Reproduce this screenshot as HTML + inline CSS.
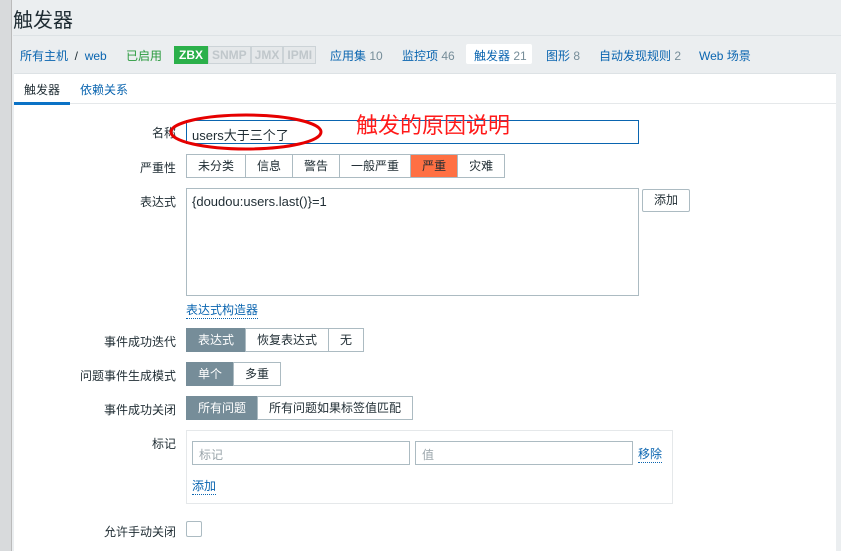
<!DOCTYPE html>
<html><head><meta charset="utf-8"><style>
*{box-sizing:border-box;margin:0;padding:0}
body{width:841px;height:551px;overflow:hidden;background:#ebeef0;position:relative;font-family:"Liberation Sans","Noto Sans CJK SC",sans-serif;font-size:12px;color:#1f2c33}
.a{position:absolute;white-space:nowrap}
.lnk{color:#0a65b0}
.cnt{color:#768d99}
.lbl{position:absolute;right:665px;text-align:right;color:#1f2c33}
.inp{position:absolute;border:1px solid #acbbc2;background:#fff}
.bg{position:absolute;display:flex;height:24px}
.bg div{border:1px solid #acbbc2;margin-left:-1px;padding:0 11px;line-height:22px;background:#fff}
.bg div.on{background:#768d99;color:#fff;border-color:#768d99}
.dot{border-bottom:1px dotted #0a65b0}
</style></head><body>
<div class="a" style="left:0;top:0;width:12px;height:551px;background:#d8dadc;border-right:1px solid #bbb"></div>
<div class="a" style="left:13px;top:4px;font-size:20px;color:#1f2c33">触发器</div>
<div class="a" style="left:13px;top:35px;width:828px;height:1px;background:#dde2e5"></div>
<div class="a lnk" style="left:20px;top:47px">所有主机 <span style="color:#1f2c33">&nbsp;/&nbsp;</span> web</div>
<div class="a" style="left:126px;top:47px;color:#2a9a3e">已启用</div>
<div class="a" style="left:174px;top:46px;display:flex;font-weight:bold;font-size:12px;height:18px;line-height:16px">
<span style="background:#2bb04a;color:#fff;padding:0 4px;border:1px solid #2bb04a">ZBX</span><span style="border:1px solid #ccd3d7;color:#c0c7cb;padding:0 3px;background:#e5e8ea">SNMP</span><span style="border:1px solid #ccd3d7;color:#c0c7cb;padding:0 3px;background:#e5e8ea">JMX</span><span style="border:1px solid #ccd3d7;color:#c0c7cb;padding:0 3px;background:#e5e8ea">IPMI</span></div>
<div class="a lnk" style="left:330px;top:47px">应用集 <span class="cnt">10</span></div>
<div class="a lnk" style="left:402px;top:47px">监控项 <span class="cnt">46</span></div>
<div class="a" style="left:466px;top:44px;width:66px;height:20px;background:#fff;border-radius:2px"></div>
<div class="a lnk" style="left:474px;top:47px">触发器 <span class="cnt">21</span></div>
<div class="a lnk" style="left:546px;top:47px">图形 <span class="cnt">8</span></div>
<div class="a lnk" style="left:599px;top:47px">自动发现规则 <span class="cnt">2</span></div>
<div class="a lnk" style="left:699px;top:47px">Web 场景</div>
<div class="a" style="left:14px;top:73px;width:822px;height:478px;background:#fff;border-top:1px solid #dde2e5"></div>
<div class="a" style="left:24px;top:81px">触发器</div>
<div class="a lnk" style="left:80px;top:81px">依赖关系</div>
<div class="a" style="left:14px;top:102px;width:56px;height:3px;background:#0a72c6"></div>
<div class="a" style="left:70px;top:103px;width:766px;height:1px;background:#e5e8ea"></div>

<div class="lbl" style="top:124px">名称</div>
<div class="inp" style="left:186px;top:120px;width:453px;height:24px;border-color:#0a65b0;padding:4px 5px;font-size:13px">users大于三个了</div>
<div class="lbl" style="top:159px">严重性</div>
<div class="bg" style="left:187px;top:154px"><div>未分类</div><div>信息</div><div>警告</div><div>一般严重</div><div style="background:#ff7043;border-color:#acbbc2">严重</div><div>灾难</div></div>
<div class="lbl" style="top:193px">表达式</div>
<div class="inp" style="left:186px;top:188px;width:453px;height:108px;padding:5px 5px;font-size:13px">{doudou:users.last()}=1</div>
<div class="inp" style="left:642px;top:189px;width:48px;height:23px;text-align:center;line-height:21px;border-radius:2px">添加</div>
<div class="a lnk dot" style="left:186px;top:301px">表达式构造器</div>

<div class="lbl" style="top:333px">事件成功迭代</div>
<div class="bg" style="left:187px;top:328px"><div class="on">表达式</div><div>恢复表达式</div><div>无</div></div>
<div class="lbl" style="top:367px">问题事件生成模式</div>
<div class="bg" style="left:187px;top:362px"><div class="on">单个</div><div>多重</div></div>
<div class="lbl" style="top:401px">事件成功关闭</div>
<div class="bg" style="left:187px;top:396px"><div class="on">所有问题</div><div>所有问题如果标签值匹配</div></div>

<div class="lbl" style="top:435px">标记</div>
<div class="a" style="left:186px;top:430px;width:487px;height:74px;border:1px solid #e5e8ea"></div>
<div class="inp" style="left:192px;top:441px;width:218px;height:24px;padding:4px 6px;color:#9aa5ab">标记</div>
<div class="inp" style="left:415px;top:441px;width:218px;height:24px;padding:4px 6px;color:#9aa5ab">值</div>
<div class="a lnk dot" style="left:638px;top:445px">移除</div>
<div class="a lnk dot" style="left:192px;top:477px">添加</div>

<div class="lbl" style="top:523px">允许手动关闭</div>
<div class="a" style="left:186px;top:521px;width:16px;height:16px;border:1px solid #acbbc2;border-radius:2px"></div>

<svg class="a" style="left:0;top:0" width="841" height="551"><ellipse cx="246" cy="132" rx="75" ry="17" fill="none" stroke="#e60000" stroke-width="3"/></svg>
<div class="a" style="left:356px;top:108px;font-size:22px;color:#ff1a1a">触发的原因说明</div>
</body></html>
